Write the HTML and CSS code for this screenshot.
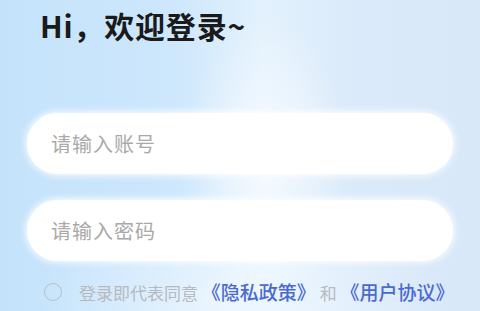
FILE: index.html
```html
<!DOCTYPE html>
<html lang="zh">
<head>
<meta charset="utf-8">
<link rel="stylesheet" href="styles.css">
</head>
<body>
<div class="page">
  <h1 class="title">Hi，欢迎登录~</h1>
  <div class="form">
    <div class="field"><span class="placeholder">请输入账号</span></div>
    <div class="field"><span class="placeholder">请输入密码</span></div>
    <div class="agree">
      <span class="radio"></span>
      <span class="agree-text">登录即代表同意 <span class="link">《隐私政策》</span> 和 <span class="link">《用户协议》</span></span>
    </div>
  </div>
</div>
</body>
</html>
```
FILE: styles.css
```css
html, body {
  margin: 0;
  padding: 0;
}
body {
  width: 480px;
  height: 311px;
  overflow: hidden;
  font-family: "Noto Sans CJK SC", "Noto Sans", sans-serif;
}
.page {
  width: 480px;
  height: 311px;
  box-sizing: border-box;
  padding: 5px 27px 0 27px;
  background:
    radial-gradient(ellipse 80px 150px at 265px 160px, rgba(255,255,255,0.7), rgba(255,255,255,0) 100%),
    radial-gradient(ellipse 200px 110px at 240px 305px, rgba(240,248,255,0.85), rgba(240,248,255,0) 100%),
    linear-gradient(90deg, #c4e3fb 0%, #cde7fc 35%, #e2f1fd 55%, #dbeafa 75%, #d8e8f9 100%);
}
.title {
  margin: 0 0 0 13px;
  font-size: 30px;
  line-height: 40px;
  font-weight: 700;
  color: #1a1a1a;
  letter-spacing: 0.8px;
}
.form {
  display: flex;
  flex-direction: column;
  gap: 26px;
  margin-top: 68px;
}
.field {
  height: 61px;
  border-radius: 31px;
  background: #ffffff;
  box-shadow: 0 0 6px 2px rgba(255,255,255,0.8);
  display: flex;
  align-items: center;
  padding-left: 24px;
}
.placeholder {
  font-size: 20px;
  color: #a9a9a9;
  letter-spacing: 1px;
}
.agree {
  display: flex;
  align-items: center;
  margin-top: -9px;
  padding-left: 17px;
}
.radio {
  width: 16px;
  height: 16px;
  border: 1.5px solid #b9bfc6;
  border-radius: 50%;
  margin-right: 17px;
  flex: none;
}
.agree-text {
  font-size: 17px;
  color: #b6babf;
  white-space: nowrap;
}
.link {
  font-size: 19px;
  color: #4a6ad0;
  font-weight: 500;
}
```
